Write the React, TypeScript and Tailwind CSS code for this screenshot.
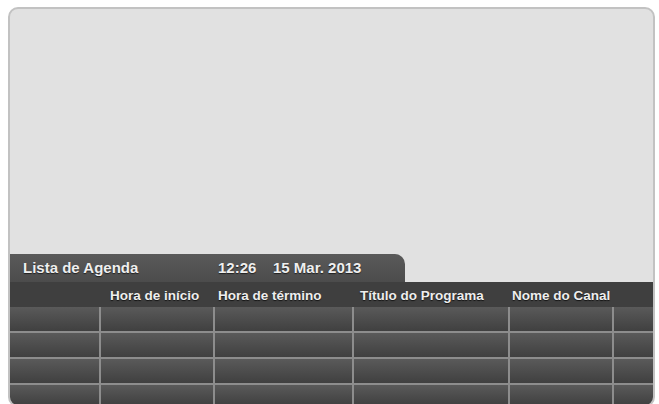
import React from 'react';

const columns = ['', 'Hora de início', 'Hora de término', 'Título do Programa', 'Nome do Canal', ''];

// left padding of each header label inside its column
const headerPad = ['pl-0', 'pl-[9px]', 'pl-[3px]', 'pl-[6px]', 'pl-[2px]', 'pl-0'];

const gridCols = 'grid grid-cols-[91px_114px_139px_156px_104px_1fr]';

const Row: React.FC<{ className: string }> = ({ className }) => (
  <div className={`${gridCols} bg-gradient-to-b from-[#5a5a5a] to-[#404040] ${className}`}>
    {columns.map((_, i) => (
      <div key={i} className={i < columns.length - 1 ? 'border-r-2 border-[#8d8d8d]' : ''} />
    ))}
  </div>
);

export default function App() {
  return (
    <div className="w-[659px] h-[404px] overflow-hidden bg-white pt-[7px] pl-[8px] font-['Liberation_Sans',Arial,sans-serif]">
      <div className="w-[647px] h-[400px] rounded-[10px] border-2 border-[#c2c2c2] bg-[#e1e1e1] flex flex-col overflow-hidden">
        <div className="flex-1" />

        {/* tab with the list title and clock */}
        <div className="w-[395px] h-[28px] bg-gradient-to-b from-[#5a5a5a] to-[#4c4c4c] rounded-tr-[10px] flex items-center text-[15px] font-bold text-[#efefef] [text-shadow:0_1px_1px_rgba(0,0,0,0.6)]">
          <span className="pl-[13px] w-[208px]">Lista de Agenda</span>
          <span className="w-[55px]">12:26</span>
          <span>15 Mar. 2013</span>
        </div>

        {/* column headings */}
        <div className={`${gridCols} h-[25px] pt-[3px] bg-[#3f3f3f] items-center text-[13.5px] font-bold text-[#eeeeee] [text-shadow:0_1px_1px_rgba(0,0,0,0.7)]`}>
          {columns.map((c, i) => (
            <span key={i} className={`${headerPad[i]} whitespace-nowrap`}>
              {c}
            </span>
          ))}
        </div>

        <Row className="h-[24px]" />
        <Row className="h-[26px] border-t-2 border-[#8d8d8d]" />
        <Row className="h-[26px] border-t-2 border-[#8d8d8d]" />
        <Row className="h-[22px] border-t-2 border-[#8d8d8d]" />
      </div>
    </div>
  );
}
